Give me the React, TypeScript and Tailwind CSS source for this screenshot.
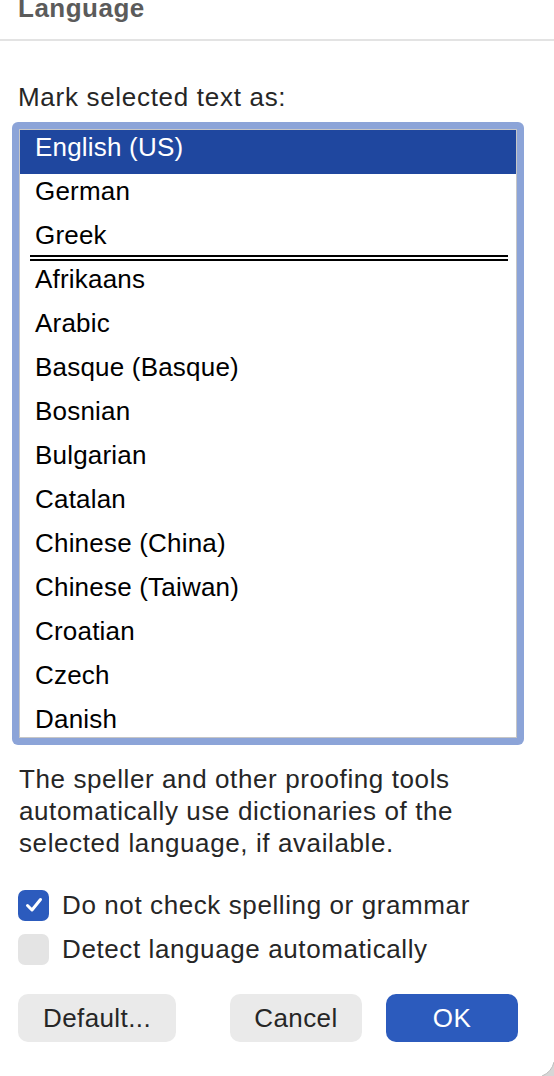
import React from "react";

const LANGUAGES = [
  "Afrikaans",
  "Arabic",
  "Basque (Basque)",
  "Bosnian",
  "Bulgarian",
  "Catalan",
  "Chinese (China)",
  "Chinese (Taiwan)",
  "Croatian",
  "Czech",
  "Danish",
];

const ListRow = ({ label, selected = false }) => (
  <div
    className={
      "flex items-center h-[44px] pb-[10px] pl-[15px] tracking-[0.2px] " +
      (selected ? "bg-[#1f479f] text-white" : "text-black")
    }
  >
    {label}
  </div>
);

const Checkbox = ({ checked, label }) => (
  <label className="flex items-center h-[44px] gap-[13px]">
    <span
      className={
        "flex items-center justify-center w-[31px] h-[31px] rounded-[7px] " +
        (checked ? "bg-[#2c5bbd]" : "bg-[#e4e4e4]")
      }
    >
      {checked && (
        <svg width="20" height="20" viewBox="0 0 20 20" fill="none">
          <path
            d="M3.5 10.5 L8 15 L16.5 4.5"
            stroke="white"
            strokeWidth="3"
            strokeLinecap="round"
            strokeLinejoin="round"
          />
        </svg>
      )}
    </span>
    <span className="text-[#262626] tracking-[0.6px]">{label}</span>
  </label>
);

export default function App() {
  const [selected] = React.useState("English (US)");

  return (
    <div className="relative w-[554px] h-[1076px] bg-white overflow-hidden font-['Liberation_Sans',Arial,sans-serif] text-[26px] leading-[30px]">
      <div className="flex flex-col h-[41px] border-b-2 border-[#e3e3e3]">
        <div className="pl-[18px] -mt-[7px] font-bold text-[#5b5b5b] tracking-[0.5px]">
          Language
        </div>
      </div>

      <div className="pl-[18px] mt-[41px] text-[#262626] tracking-[0.7px]">
        Mark selected text as:
      </div>

      <div className="ml-[12px] mt-[10px] w-[512px] h-[623px] rounded-[6px] bg-[#8ca4d8] p-[7px]">
        <div className="h-full bg-white border border-[#c6c6c6] overflow-hidden">
          <ListRow label="English (US)" selected={selected === "English (US)"} />
          <ListRow label="German" />
          <div className="flex flex-col h-[44px]">
            <div className="flex items-center h-[34px] pl-[15px] tracking-[0.2px] text-black">
              Greek
            </div>
            <div className="h-[10px] pt-[3px] pl-[10px] pr-[8px]">
              <div className="h-[2px] bg-black" />
              <div className="h-[2px] mt-[2px] bg-black" />
            </div>
          </div>
          {LANGUAGES.map((lang) => (
            <ListRow key={lang} label={lang} />
          ))}
        </div>
      </div>

      <div className="pl-[19px] mt-[18px] pr-[10px] leading-[32px] text-[#262626] tracking-[0.6px]">
        The speller and other proofing tools automatically use dictionaries of the selected
        language, if available.
      </div>

      <div className="pl-[18px] mt-[24px] flex flex-col">
        <Checkbox checked label="Do not check spelling or grammar" />
        <Checkbox checked={false} label="Detect language automatically" />
      </div>

      <div className="flex items-center pl-[18px] mt-[23px] h-[48px] tracking-[0.4px]">
        <button className="w-[158px] h-[48px] rounded-[10px] bg-[#eaeaea] text-[#262626]">
          Default...
        </button>
        <button className="ml-[54px] w-[132px] h-[48px] rounded-[10px] bg-[#eaeaea] text-[#262626]">
          Cancel
        </button>
        <button className="ml-[24px] w-[132px] h-[48px] rounded-[10px] bg-[#2c5bbd] text-white">
          OK
        </button>
      </div>

      <svg
        className="absolute right-0 bottom-0"
        width="16"
        height="16"
        viewBox="0 0 16 16"
      >
        <path d="M16 2 A 20 20 0 0 1 4 16 L16 16 Z" fill="#d6d6d6" />
        <path d="M16 2 A 20 20 0 0 1 4 16" stroke="#bdbdbd" strokeWidth="1" fill="none" />
      </svg>
    </div>
  );
}
